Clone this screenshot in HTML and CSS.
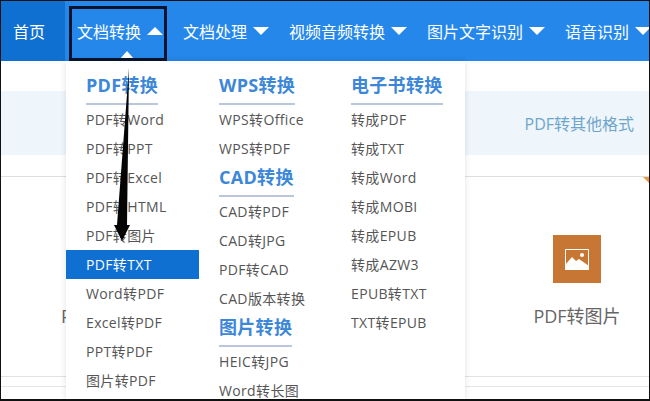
FILE: index.html
```html
<!DOCTYPE html>
<html lang="zh">
<head>
<meta charset="utf-8">
<title>文档转换</title>
<link rel="stylesheet" href="styles.css">
</head>
<body>
<div class="page">
  <nav class="nav">
    <a class="nav-home">首页</a>
    <a class="nav-item">文档转换<i class="tri up"></i></a>
    <a class="nav-item">文档处理<i class="tri"></i></a>
    <a class="nav-item">视频音频转换<i class="tri"></i></a>
    <a class="nav-item">图片文字识别<i class="tri"></i></a>
    <a class="nav-item">语音识别<i class="tri"></i></a>
  </nav>
  <main class="content">
    <div class="band"><span>PDF转其他格式</span></div>
    <div class="cards">
      <div class="card-left"><span>P</span></div>
      <div class="card">
        <div class="card-icon">
          <svg width="24" height="21" viewBox="0 0 24 21"><path d="M.5.5h23v20H.5z" fill="none" stroke="#fff" stroke-width="1"/><path d="M0 21v-5l7-8 4 4 3-2 10 7v4z" fill="#fff"/><circle cx="17" cy="6" r="2" fill="#fff"/></svg>
        </div>
        <div class="card-title">PDF转图片</div>
      </div>
      <div class="corner"></div>
    </div>
    <div class="foot"></div>
  </main>

  <div class="menu">
    <div class="col col-1">
      <h3>PDF转换</h3>
      <a>PDF转Word</a><a>PDF转PPT</a><a>PDF转Excel</a><a>PDF转HTML</a><a>PDF转图片</a>
      <a class="active">PDF转TXT</a>
      <a>Word转PDF</a><a>Excel转PDF</a><a>PPT转PDF</a><a>图片转PDF</a>
    </div>
    <div class="col col-2">
      <h3>WPS转换</h3>
      <a>WPS转Office</a><a>WPS转PDF</a>
      <h3>CAD转换</h3>
      <a>CAD转PDF</a><a>CAD转JPG</a><a>PDF转CAD</a><a>CAD版本转换</a>
      <h3>图片转换</h3>
      <a>HEIC转JPG</a><a>Word转长图</a>
    </div>
    <div class="col col-3">
      <h3>电子书转换</h3>
      <a>转成PDF</a><a>转成TXT</a><a>转成Word</a><a>转成MOBI</a><a>转成EPUB</a><a>转成AZW3</a><a>EPUB转TXT</a><a>TXT转EPUB</a>
    </div>
  </div>

  <div class="notch"></div>
  <div class="highlight"></div>
  <svg class="arrow" width="30" height="180" viewBox="0 0 30 180"><path d="M28 0 L26 157 L29 157 L21 173 L13 157 L16 157 Z" fill="#050505"/></svg>
</div>
</body>
</html>
```
FILE: styles.css
```css
* { box-sizing: border-box; }
html, body { margin: 0; padding: 0; }
body { background: #fff; }
.page {
  position: relative;
  width: 650px;
  height: 401px;
  overflow: hidden;
  font-family: "Open Sans", "Noto Sans CJK SC", sans-serif;
  border: 1px solid #111;
  border-width: 1px 1px 2px 1px;
  background: #fff;
}
.nav {
  display: flex;
  height: 60px;
  background: #2587ea;
  color: #fff;
  font-size: 16px;
  white-space: nowrap;
}
.nav-home {
  display: flex;
  flex: none;
  align-items: center;
  width: 64px;
  padding-left: 12px;
  margin-right: 2px;
  background: #0f70d2;
}
.nav-item {
  display: flex;
  flex: none;
  align-items: center;
  gap: 6px;
  padding: 0 10px;
}
.tri {
  width: 0;
  height: 0;
  border-left: 8px solid transparent;
  border-right: 8px solid transparent;
  border-top: 8px solid #fff;
}
.tri.up {
  border-top: 0;
  border-bottom: 8px solid #fff;
}
.content { display: flex; flex-direction: column; }
.band {
  display: flex;
  flex: none;
  align-items: center;
  justify-content: flex-end;
  height: 64px;
  margin-top: 30px;
  padding-right: 15px;
  background: #eef5fb;
  color: #6ea6cb;
  font-size: 16px;
}
.cards {
  position: relative;
  display: flex;
  flex: none;
  justify-content: space-between;
  height: 201px;
  margin-top: 21px;
  border-top: 1px solid #dfdfdf;
  border-bottom: 1px solid #e2e2e2;
}
.card-left {
  padding: 127px 0 0 60px;
  color: #666;
  font-size: 18px;
}
.card {
  display: flex;
  flex-direction: column;
  align-items: center;
  width: 90px;
  margin-right: 27px;
  padding-top: 58px;
}
.card-icon {
  display: flex;
  flex: none;
  align-items: center;
  justify-content: center;
  width: 48px;
  height: 48px;
  background: #c87634;
}
.card-title {
  margin-top: 20px;
  color: #666;
  font-size: 18px;
  line-height: 26px;
  white-space: nowrap;
}
.corner {
  position: absolute;
  top: 0;
  right: 0;
  width: 0;
  height: 0;
  border-top: 6px solid #e89a3c;
  border-left: 6px solid transparent;
}
.foot { flex: none; height: 10px; border-bottom: 1px solid #e6e6e6; }
.menu {
  position: absolute;
  top: 60px;
  left: 65px;
  display: flex;
  width: 399px;
  height: 340px;
  background: #fff;
  box-shadow: 0 0 6px rgba(0, 0, 0, .12);
}
.col { display: flex; flex-direction: column; }
.col-1 { width: 133px; }
.col-2 { width: 132px; }
.col-3 { width: 134px; }
.col h3 {
  flex: none;
  align-self: flex-start;
  margin: 0 0 0 20px;
  height: 34px;
  border-bottom: 2px solid #b9c6dc;
  color: #3c87d8;
  font-size: 18px;
  font-weight: 700;
  letter-spacing: .3px;
  line-height: 29px;
  white-space: nowrap;
}
.col-1 h3, .col-2 h3:first-child, .col-3 h3 { margin-top: 10px; }
.col a {
  display: block;
  flex: none;
  height: 29px;
  padding-left: 20px;
  color: #555;
  font-size: 14px;
  letter-spacing: .35px;
  line-height: 29px;
  white-space: nowrap;
}
.col a.active { background: #0f70d2; color: #fff; }
.notch {
  position: absolute;
  top: 50px;
  left: 118px;
  width: 0;
  height: 0;
  border-left: 8px solid transparent;
  border-right: 8px solid transparent;
  border-bottom: 9px solid #fff;
}
.highlight {
  position: absolute;
  top: 5px;
  left: 68px;
  width: 98px;
  height: 55px;
  border: 3px solid #06142e;
}
.arrow { position: absolute; top: 67px; left: 100px; }
```
